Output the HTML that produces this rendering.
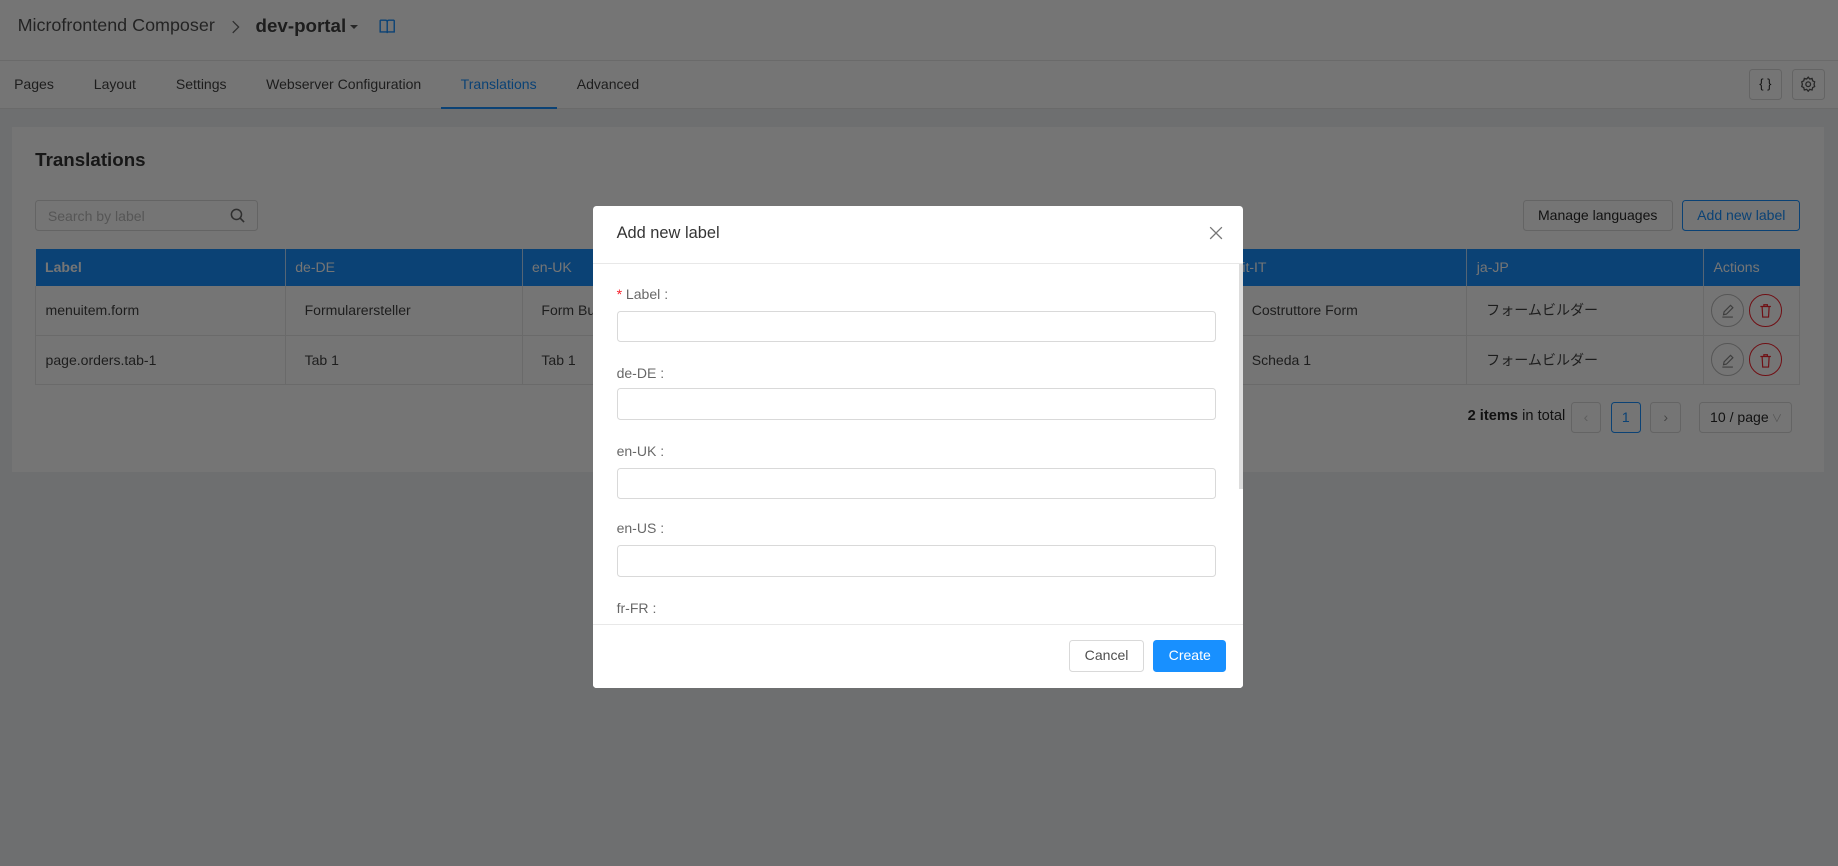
<!DOCTYPE html>
<html><head><meta charset="utf-8"><style>
html{zoom:1.17219}
*{box-sizing:border-box;margin:0;padding:0}
body{width:1568px;height:739px;overflow:hidden;position:relative;font-family:"Liberation Sans","Noto Sans CJK JP",sans-serif;font-size:12px;color:rgba(0,0,0,.85);background:#f0f2f5}
.abs{position:absolute}
.hdr{left:0;top:0;width:1568px;height:52px;background:#fff;border-bottom:1px solid #e8e8e8}
.tabs{left:0;top:52px;width:1568px;height:41px;background:#fff;border-bottom:1px solid #e8e8e8}
.tab{position:absolute;top:13px;font-size:12px;color:rgba(0,0,0,.75)}
.card{left:10px;top:108px;width:1546px;height:295px;background:#fff}
.btn{position:absolute;border:1px solid #d9d9d9;border-radius:3px;background:#fff;text-align:center;font-size:12px}
table{border-collapse:collapse;position:absolute;left:30px;top:212px;width:1506px;font-size:12px}
th{background:#1890ff;color:#fff;text-align:left;font-weight:normal;height:32px;padding-left:8px;border-right:1px solid #b9dcff}
th:first-child{font-weight:bold}
td{height:42px;border-bottom:1px solid #e8e8e8;border-right:1px solid #e8e8e8;padding-left:16px;color:rgba(0,0,0,.75)}
td:first-child{padding-left:8px;border-left:1px solid #e8e8e8}
.circ{display:inline-block;width:28px;height:28px;border-radius:50%;border:1px solid #bbb;vertical-align:middle;margin-right:4px;position:relative}
.circ svg{position:absolute;left:7px;top:7px}
.ov{left:0;top:0;width:1568px;height:739px;background:rgba(0,0,0,.54)}
.modal{left:506px;top:176px;width:554px;height:411px;background:#fff;border-radius:3px;overflow:hidden}
.lbl{position:absolute;left:20px;font-size:12px;color:rgba(0,0,0,.6)}
.inp{position:absolute;left:20px;width:511px;height:27px;border:1px solid #d9d9d9;border-radius:3px}
</style></head><body>
<div class="abs hdr">
 <div class="abs" style="left:15px;top:13px;font-size:15.3px;color:rgba(0,0,0,.7)">Microfrontend Composer</div>
 <svg class="abs" style="left:197px;top:17px" width="8" height="12" viewBox="0 0 8 12"><path d="M1.5 1l5 5-5 5" fill="none" stroke="#666" stroke-width="1.1"/></svg>
 <div class="abs" style="left:218px;top:13px;font-size:16px;font-weight:bold;color:rgba(0,0,0,.75)">dev-portal</div>
 <div class="abs" style="left:299px;top:21px;width:0;height:0;border-left:3.5px solid transparent;border-right:3.5px solid transparent;border-top:4px solid #555"></div>
 <svg class="abs" style="left:323px;top:16px" width="14" height="13" viewBox="0 0 14 13"><path d="M1 1h4.5c1 0 1.5.6 1.5 1.5V12M13 1H8.5C7.5 1 7 1.6 7 2.5M1 1v10h5.5M13 1v10H7.5" fill="none" stroke="#1890ff" stroke-width="1.2"/></svg>
</div>
<div class="abs tabs">
 <span class="tab" style="left:12px">Pages</span><span class="tab" style="left:80px">Layout</span><span class="tab" style="left:150px">Settings</span><span class="tab" style="left:227px">Webserver Configuration</span><span class="tab" style="left:393px;color:#1890ff">Translations</span><span class="tab" style="left:492px">Advanced</span>
 <div class="abs" style="left:376px;top:39px;width:99px;height:2px;background:#1890ff"></div>
 <div class="btn" style="left:1492px;top:7px;width:28px;height:26px;line-height:24px;font-size:11px">{ }</div>
 <div class="btn" style="left:1529px;top:7px;width:28px;height:26px"><svg style="margin-top:5px" width="14" height="14" viewBox="0 0 14 14"><circle cx="7" cy="7" r="2" fill="none" stroke="#555" stroke-width="1.1"/><path d="M7 1l1.3 1.6 2-.5.5 2L12.5 5 12 7l.5 2-1.7.9-.5 2-2-.5L7 13l-1.3-1.6-2 .5-.5-2L1.5 9 2 7l-.5-2 1.7-.9.5-2 2 .5z" fill="none" stroke="#555" stroke-width="1.1"/></svg></div>
</div>
<div class="abs card"></div>
<div class="abs" style="left:30px;top:127px;font-size:16px;font-weight:bold;color:rgba(0,0,0,.8)">Translations</div>
<div class="btn" style="left:30px;top:171px;width:190px;height:26px;text-align:left;padding:6px 10px;color:#bbb">Search by label<svg class="abs" style="right:10px;top:6px" width="13" height="13" viewBox="0 0 13 13"><circle cx="5.5" cy="5.5" r="4.3" fill="none" stroke="#666" stroke-width="1.3"/><path d="M8.7 8.7l3.3 3.3" stroke="#666" stroke-width="1.4"/></svg></div>
<div class="btn" style="left:1299px;top:171px;width:128px;height:26px;line-height:24px">Manage languages</div>
<div class="btn" style="left:1435px;top:171px;width:101px;height:26px;line-height:24px;border-color:#1890ff;color:#1890ff">Add new label</div>
<table>
<tr><th style="width:213px">Label</th><th style="width:202px">de-DE</th><th style="width:202px">en-UK</th><th style="width:202px">en-US</th><th style="width:202px">fr-FR</th><th style="width:200px">it-IT</th><th style="width:202px">ja-JP</th><th style="border:0">Actions</th></tr>
<tr><td>menuitem.form</td><td>Formularersteller</td><td>Form Builder</td><td>Form Builder</td><td>Form Builder</td><td>Costruttore Form</td><td>フォームビルダー</td><td style="padding-left:6px"><span class="circ"><svg width="13" height="13" viewBox="0 0 13 13"><path d="M3 10l.5-2.5L9 2l2 2-5.5 5.5z M2 12h9" fill="none" stroke="#888" stroke-width="1"/></svg></span><span class="circ" style="border-color:#f5222d"><svg width="13" height="13" viewBox="0 0 13 13"><path d="M2 3h9M5 3V1.5h3V3M3.5 3l.5 9h5l.5-9" fill="none" stroke="#f5222d" stroke-width="1"/></svg></span></td></tr>
<tr><td>page.orders.tab-1</td><td>Tab 1</td><td>Tab 1</td><td>Tab 1</td><td>Tab 1</td><td>Scheda 1</td><td>フォームビルダー</td><td style="padding-left:6px"><span class="circ"><svg width="13" height="13" viewBox="0 0 13 13"><path d="M3 10l.5-2.5L9 2l2 2-5.5 5.5z M2 12h9" fill="none" stroke="#888" stroke-width="1"/></svg></span><span class="circ" style="border-color:#f5222d"><svg width="13" height="13" viewBox="0 0 13 13"><path d="M2 3h9M5 3V1.5h3V3M3.5 3l.5 9h5l.5-9" fill="none" stroke="#f5222d" stroke-width="1"/></svg></span></td></tr>
</table>
<div class="abs" style="left:1252px;top:348px;font-size:12.5px"><b>2 items</b> in total</div>
<div class="btn" style="left:1340px;top:343px;width:26px;height:26px;line-height:24px;color:#ccc">‹</div>
<div class="btn" style="left:1374px;top:343px;width:26px;height:26px;line-height:24px;border-color:#1890ff;color:#1890ff">1</div>
<div class="btn" style="left:1408px;top:343px;width:26px;height:26px;line-height:24px;color:#999">›</div>
<div class="btn" style="left:1449px;top:343px;width:80px;height:26px;line-height:24px;text-align:left;padding-left:9px">10 / page<span style="color:#bbb;font-size:9px"> ∨</span></div>
<div class="abs ov"></div>
<div class="abs modal">
 <div class="abs" style="left:20px;top:15px;font-size:14px;color:rgba(0,0,0,.8)">Add new label</div>
 <svg class="abs" style="left:525px;top:17px" width="12" height="12" viewBox="0 0 12 12"><path d="M1 1l10 10M11 1L1 11" stroke="#777" stroke-width="1.1"/></svg>
 <div class="abs" style="left:0;top:48px;width:554px;height:1px;background:#e8e8e8"></div>
 <div class="lbl" style="top:68px"><span style="color:#f5222d">*</span> Label :</div>
 <div class="inp" style="top:89px"></div>
 <div class="lbl" style="top:135px">de-DE :</div>
 <div class="inp" style="top:155px"></div>
 <div class="lbl" style="top:202px">en-UK :</div>
 <div class="inp" style="top:223px"></div>
 <div class="lbl" style="top:268px">en-US :</div>
 <div class="inp" style="top:289px"></div>
 <div class="lbl" style="top:336px">fr-FR :</div>
 <div class="abs" style="left:551px;top:49px;width:3px;height:192px;background:#ddd"></div>
 <div class="abs" style="left:0;top:356px;width:554px;height:55px;background:#fff;border-top:1px solid #e8e8e8"></div>
 <div class="btn" style="left:406px;top:370px;width:64px;height:27px;line-height:25px;color:rgba(0,0,0,.7)">Cancel</div>
 <div class="btn" style="left:478px;top:370px;width:62px;height:27px;line-height:25px;background:#1890ff;border-color:#1890ff;color:#fff">Create</div>
</div>
</body></html>
